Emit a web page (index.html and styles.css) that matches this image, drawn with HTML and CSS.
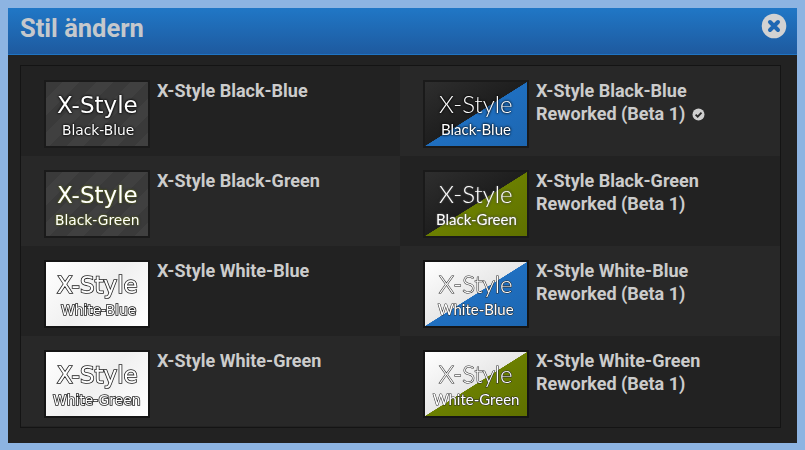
FILE: index.html
```html
<!DOCTYPE html>
<html lang="de">
<head>
<meta charset="utf-8">
<title>Stil ändern</title>
<link rel="stylesheet" href="styles.css">
</head>
<body>
<div class="dialog">
  <header class="head">
    <h1 class="title">Stil ändern</h1>
    <svg class="close" width="26" height="26" viewBox="0 0 26 26"><circle cx="13" cy="13" r="12.3" fill="#d2d2d2"/><path d="M9 9L17 17M17 9L9 17" stroke="#1f68b4" stroke-width="4" stroke-linecap="round"/></svg>
  </header>
  <div class="body">
    <div class="grid">
      <div class="cell dark"><div class="thumb t-black"><span class="big">X-Style</span><span class="small indent">Black-Blue</span></div><div class="name">X-Style Black-Blue</div></div>
      <div class="cell light"><div class="thumb t-black r-blue rw"><span class="big">X-Style</span><span class="small">Black-Blue</span></div><div class="name">X-Style Black-Blue<br>Reworked (Beta 1) <svg class="check" width="13" height="13" viewBox="0 0 13 13"><circle cx="6.5" cy="6.5" r="6" fill="#cfcfcf"/><path d="M3.6 6.6L5.7 8.7L9.5 4.6" fill="none" stroke="#282828" stroke-width="1.8"/></svg></div></div>
      <div class="cell light"><div class="thumb t-black g-glow"><span class="big">X-Style</span><span class="small">Black-Green</span></div><div class="name">X-Style Black-Green</div></div>
      <div class="cell dark"><div class="thumb t-black r-green rw g-glow"><span class="big">X-Style</span><span class="small">Black-Green</span></div><div class="name">X-Style Black-Green<br>Reworked (Beta 1)</div></div>
      <div class="cell dark"><div class="thumb t-white"><span class="big">X-Style</span><span class="small indent">White-Blue</span></div><div class="name">X-Style White-Blue</div></div>
      <div class="cell light"><div class="thumb t-white r-blue rw"><span class="big">X-Style</span><span class="small">White-Blue</span></div><div class="name">X-Style White-Blue<br>Reworked (Beta 1)</div></div>
      <div class="cell light"><div class="thumb t-white"><span class="big">X-Style</span><span class="small">White-Green</span></div><div class="name">X-Style White-Green</div></div>
      <div class="cell dark"><div class="thumb t-white r-green rw"><span class="big">X-Style</span><span class="small">White-Green</span></div><div class="name">X-Style White-Green<br>Reworked (Beta 1)</div></div>
    </div>
  </div>
</div>
</body>
</html>
```
FILE: styles.css
```css
* { box-sizing: border-box; }
html, body { height: 100%; }
body {
  margin: 0;
  padding: 8px;
  background: #8db4e2;
  font-family: Roboto, "Liberation Sans", sans-serif;
  overflow: hidden;
}
.dialog {
  width: 789px;
  height: 435px;
  background: #222222;
  display: flex;
  flex-direction: column;
}
.head {
  height: 47px;
  flex: none;
  padding: 5px 10px 0 12px;
  display: flex;
  justify-content: space-between;
  align-items: flex-start;
  background: linear-gradient(to bottom, #2077c6, #1e5a9f);
  border-bottom: 1px solid #1f74c4;
}
.title {
  margin: 0;
  font-size: 25.5px;
  line-height: 30px;
  font-weight: 700;
  color: #c5c8cc;
}
.close { flex: none; }
.body { padding: 10px 12px 0; }
.grid {
  width: 761px;
  height: 363px;
  border: 1px solid #141414;
  display: grid;
  grid-template-columns: 379px 380px;
  grid-template-rows: repeat(4, 90px);
}
.cell {
  display: flex;
  align-items: flex-start;
  padding: 14px 0 0 23px;
  gap: 7px;
}
.dark { background: #222222; }
.light { background: #282828; }
.name {
  font-size: 18px;
  line-height: 23px;
  font-weight: 700;
  color: #cccccc;
  margin-top: -1px;
}
.check { vertical-align: -1px; margin-left: 2px; }
.thumb {
  flex: none;
  width: 106px;
  height: 68px;
  border: 2px solid #151515;
  display: flex;
  flex-direction: column;
  align-items: center;
  justify-content: center;
  font-family: "DejaVu Sans", sans-serif;
  color: #ffffff;
}
.thumb span { will-change: transform; }
.big { font-size: 23px; line-height: 27px; margin-top: 2px; }
.small { font-size: 13.8px; line-height: 17px; margin-top: 3px; }
.indent { margin-left: 3px; }
.t-black {
  background: repeating-linear-gradient(135deg, #3a3a3a 0 12px, #404040 12px 24px);
  border-color: #1a1a1a;
  text-shadow: 0 0 2px #000, 0 0 3px #000;
}
.t-black.g-glow { text-shadow: 0 0 2px #7f8f10, 0 0 3px #222; }
.t-white {
  background: linear-gradient(135deg, #ffffff, #f0f0f0 50%, #ffffff);
  color: #ffffff;
  -webkit-text-stroke: 1.6px #222;
  paint-order: stroke fill;
}
.rw { font-family: Lato, "Open Sans", sans-serif; font-weight: 300; }
.rw .big { font-size: 24px; margin-top: -1px; }
.rw .small { font-size: 15px; margin-top: 4px; }
.rw.t-black { text-shadow: 0 0 2px #000, 0 0 3px #000; }
.rw.t-black .small { font-weight: 400; }
.rw.t-black.g-glow { text-shadow: 0 0 2px #777, 0 0 3px #222; }
.rw.t-white { -webkit-text-stroke: 1.1px #2a2a2a; }
.rw.t-white .small { font-weight: 400; }
.r-blue.t-black { background: linear-gradient(to bottom right, #2e2e2e, #1e1e1e 49.8%, #1f6fc0 50.2%, #1d66b0); }
.r-blue.t-white { background: linear-gradient(to bottom right, #ffffff, #e8e8e8 49.8%, #1f6fc0 50.2%, #1d66b0); }
.r-green.t-black { background: linear-gradient(to bottom right, #2e2e2e, #1e1e1e 49.8%, #6b7f00 50.2%, #5f7000); }
.r-green.t-white { background: linear-gradient(to bottom right, #ffffff, #e8e8e8 49.8%, #6b7f00 50.2%, #5f7000); }
```
